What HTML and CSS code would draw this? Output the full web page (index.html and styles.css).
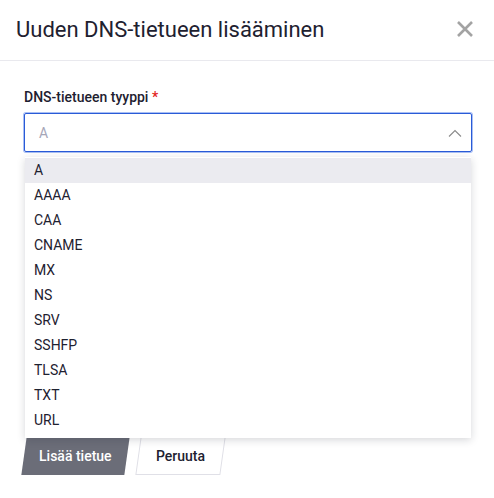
FILE: index.html
```html
<!DOCTYPE html>
<html lang="fi">
<head>
<meta charset="utf-8">
<link rel="stylesheet" href="styles.css">
</head>
<body>
<div class="modal">
  <header class="modal-header">
    <h1 class="modal-title">Uuden DNS-tietueen lisääminen</h1>
    <button class="close" aria-label="Sulje">
      <svg width="18" height="18" viewBox="0 0 18 18"><path d="M2 2 L16 16 M16 2 L2 16" stroke="#a3a3a3" stroke-width="2.6" stroke-linecap="butt"/></svg>
    </button>
  </header>
  <div class="modal-body">
    <div class="field">
      <label class="label">DNS-tietueen tyyppi <span class="req">*</span></label>
      <div class="select-wrap">
        <div class="select">
          <span class="placeholder">A</span>
          <svg class="chev" width="14" height="8" viewBox="0 0 14 8"><path d="M1 7.5 L7 1.5 L13 7.5" fill="none" stroke="#8a8a8a" stroke-width="1.1"/></svg>
        </div>
        <ul class="menu">
          <li class="active">A</li>
          <li>AAAA</li>
          <li>CAA</li>
          <li>CNAME</li>
          <li>MX</li>
          <li>NS</li>
          <li>SRV</li>
          <li>SSHFP</li>
          <li>TLSA</li>
          <li>TXT</li>
          <li>URL</li>
        </ul>
      </div>
    </div>
    <div class="actions">
      <button class="btn btn-primary"><span>Lisää tietue</span></button>
      <button class="btn btn-secondary"><span>Peruuta</span></button>
    </div>
  </div>
</div>
</body>
</html>
```
FILE: styles.css
```css
* { box-sizing: border-box; }
html, body { margin: 0; padding: 0; background: #fff; }
body { font-family: Roboto, "Noto Sans", sans-serif; color: #1e2130; }
.modal { width: 494px; height: 498px; background: #fff; }
.modal-header {
  height: 61px;
  display: flex;
  align-items: center;
  justify-content: space-between;
  padding: 0 20px 0 16px;
  border-bottom: 1px solid #e9e9ee;
}
.modal-title { margin: 0; font-size: 22px; font-weight: 400; color: #1e2130; letter-spacing: 0; padding-bottom: 1px; }
.close { border: 0; background: none; padding: 0; width: 18px; height: 18px; display: flex; cursor: pointer; margin-top: -2px; }
.modal-body { padding: 26px 22px 0 24px; }
.field { display: flex; flex-direction: column; }
.label { font-size: 14px; font-weight: 500; line-height: 20px; color: #1e2130; margin-bottom: 6px; }
.req { color: #e2231a; }
.select-wrap { position: relative; }
.select {
  height: 39px;
  border: 1px solid #2a5bd7;
  border-radius: 2px;
  box-shadow: 0 0 0 1px #a9bff4;
  display: flex;
  align-items: center;
  justify-content: space-between;
  padding: 0 9px 0 14px;
}
.placeholder { font-size: 14px; color: #a6a6b8; }
.chev { margin-top: 1px; }
.menu {
  position: absolute;
  left: 1px; right: 1px;
  top: 44px;
  margin: 0; padding: 1px 0 5px;
  list-style: none;
  background: #fff;
  box-shadow: 0 2px 8px rgba(30, 33, 48, 0.18);
  z-index: 2;
}
.menu li { height: 25px; line-height: 25px; padding-left: 9px; font-size: 14px; color: #1e2130; }
.menu li.active { background: #ebebf0; }
.actions { display: flex; gap: 11px; margin-top: 285px; }
.btn {
  height: 38px;
  border: 0;
  background: none;
  font-family: inherit;
  font-size: 14px;
  font-weight: 500;
  white-space: nowrap;
  padding: 0 15px;
  cursor: pointer;
  transform: skewX(-8deg);
}
.btn span { display: inline-block; transform: skewX(8deg); }
.btn-primary { background: #6b6d78; color: #fff; }
.btn-secondary { background: #fff; color: #1e2130; border: 1px solid #e0e0e7; padding: 0 17px; }
```
